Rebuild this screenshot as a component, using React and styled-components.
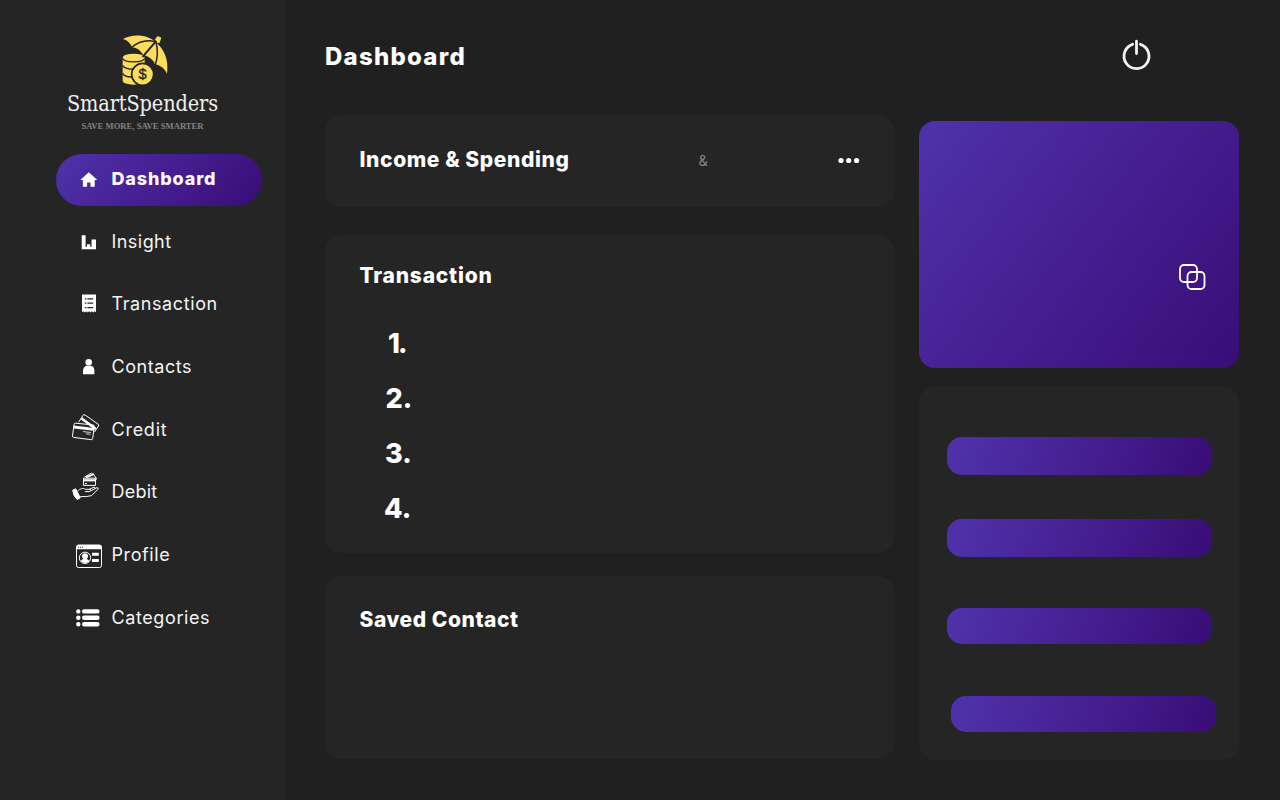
import React from "react";
import styled, { createGlobalStyle } from "styled-components";

const Global = createGlobalStyle`
  * { box-sizing: border-box; }
  body { margin: 0; background: #202020; color: #fff; font-family: Inter, "Liberation Sans", sans-serif; }
  h1, h2, p, ol, ul { margin: 0; padding: 0; list-style: none; }
  svg { display: block; flex: none; overflow: visible; }
`;

const purple = "linear-gradient(128deg, #4f32ab 0%, #441d8e 55%, #3a0e79 97%)";

const Page = styled.div`
  display: flex;
  width: 1280px;
  height: 800px;
  overflow: hidden;
  background: #202020;
`;

const Sidebar = styled.aside`
  width: 285px;
  flex: none;
  background: #252525;
`;

const Brand = styled.div`
  height: 154px;
  padding-top: 35px;
  display: flex;
  flex-direction: column;
  align-items: center;
`;

const LogoSvg = styled.svg`
  margin-left: 5px;
`;

const BrandName = styled.p`
  margin-top: 5px;
  font: 21.5px/26px "DejaVu Serif Condensed", "DejaVu Serif", serif;
  font-stretch: condensed;
  letter-spacing: -0.12px;
  white-space: nowrap;
  color: #f0f0f0;
`;

const Tagline = styled.p`
  margin-top: 4px;
  font: bold 8.6px/11px "Liberation Serif", serif;
  letter-spacing: 0.02px;
  white-space: nowrap;
  color: #878282;
`;

const Nav = styled.nav`
  display: flex;
  flex-direction: column;
  gap: 10.7px;
  margin-left: 56px;
  width: 206px;
`;

const NavItem = styled.div`
  display: flex;
  align-items: center;
  height: 52px;
  padding-left: 16px;
  border-radius: 26px;
  background: ${(p) => (p.$active ? purple : "none")};
`;

const NavLabel = styled.span`
  margin: 0 0 2px 7.5px;
  font-size: 18px;
  line-height: 24px;
  font-weight: ${(p) => (p.$active ? 800 : 400)};
  letter-spacing: ${(p) => p.$ls}px;
  color: ${(p) => (p.$active ? "#fbf6ff" : "#f4f4f4")};
`;

const Main = styled.main`
  flex: 1;
  padding: 0 41px 0 40px;
`;

const Header = styled.header`
  display: flex;
  justify-content: space-between;
  align-items: center;
  height: 114px;
  padding-right: 88px;
`;

const PowerSvg = styled.svg`
  margin-bottom: 3px;
`;

const Title = styled.h1`
  font-size: 24px;
  line-height: 30px;
  font-weight: 800;
  letter-spacing: ${(p) => p.$ls}px;
`;

const Columns = styled.div`
  display: flex;
  justify-content: space-between;
`;

const Left = styled.div`
  display: flex;
  flex-direction: column;
  width: 569px;
  padding-top: 1px;
`;

const Right = styled.div`
  display: flex;
  flex-direction: column;
  width: 320px;
  padding-top: 7px;
`;

const Card = styled.section`
  height: ${(p) => p.$h}px;
  margin-bottom: ${(p) => p.$gap || 0}px;
  padding: ${(p) => p.$pad || "0"};
  border-radius: 16px;
  background: #252525;
`;

const SummaryRow = styled.div`
  display: flex;
  align-items: center;
  height: 100%;
  padding-bottom: 2px;
`;

const CardTitle = styled.h2`
  font-size: 21px;
  line-height: 26px;
  font-weight: 800;
  white-space: nowrap;
  letter-spacing: ${(p) => p.$ls}px;
  width: ${(p) => (p.$w ? p.$w + "px" : "auto")};
`;

const Legend = styled.span`
  flex: 1;
  font-size: 14.5px;
  color: #858585;
`;

const Numbers = styled.ol`
  margin-top: 27px;
`;

const NumberRow = styled.li`
  height: 55px;
  line-height: 55px;
  padding-left: ${(p) => p.$indent}px;
  font-size: 27px;
  font-weight: 800;
  letter-spacing: ${(p) => p.$ls || 0}px;
`;

const BalanceCard = styled.section`
  display: flex;
  justify-content: flex-end;
  height: 247px;
  margin-bottom: 18px;
  padding: 142.5px 33.5px 0 0;
  border-radius: 16px;
  background: ${purple};
`;

const Pill = styled.div`
  width: 265px;
  height: ${(p) => p.$h}px;
  margin: ${(p) => p.$m};
  border-radius: 15px;
  background: linear-gradient(112deg, #4f32ab 2%, #441d8e 58%, #3a0e79 95%);
`;

function Logo() {
  return (
    <LogoSvg width="47" height="51" viewBox="215 30 141 153">
      <g fill="#fbdc5c">
        <path d="M217 98a33 12 0 0 1 66 0v70a33 11 0 0 1-66 0z" />
        <g fill="none" stroke="#252525" strokeWidth="4">
          <path d="M217 100c4 14 62 14 66 0M217 122c6 11 30 12 44 9M217 145c6 11 24 12 38 10" />
        </g>
        <circle cx="277" cy="148" r="33" stroke="#252525" strokeWidth="5" />
        <path d="M218 42c28-16 72-14 97 8 28 22 41 57 35 96-7-14-18-25-36-28-4-12-16-24-36-28-6-13-18-22-33-23-4-12-13-21-27-25z" />
        <path d="M314 43l8-10 11 5-5 15-8 1z" />
      </g>
      <g fill="none" stroke="#252525" strokeLinecap="round" strokeWidth="4.5">
        <path d="M315 50c-26-7-50 0-70 16M317 51c6 24 5 48-2 68" />
        <path d="M316 50l-38 44" strokeWidth="6" />
      </g>
      <text x="277" y="163" textAnchor="middle" fontFamily="Liberation Sans" fontSize="44" stroke="#252525" strokeWidth="1" fill="#252525">$</text>
    </LogoSvg>
  );
}

const icons = {
  home: <path transform="translate(6.6 5.75) scale(.85)" d="M10 20v-5h4v5h5v-8h3L12 3 2 12h3v8z" />,
  insight: <path d="M9.7 8.2h3.9v11.500h1.400v-2.500h3.200v2.500h1.300v-7.200H24v9.800H9.700z" />,
  receipt: (
    <>
      <path d="M10 5.6h14v17.6l-1.4-.9-1.4 1.3-1.4-1.3-1.4 1.3-1.4-1.3-1.4 1.3-1.4-1.3-1.4 1.3-1.4-1.3L10 23.2z" />
      <path d="M12.8 9.8h1.6m1 0h5.8M12.8 14.2h1.6m1 0h5.8M12.8 18.6h1.6m1 0h5.8" stroke="#252525" strokeWidth="1.2" />
    </>
  ),
  person: (
    <>
      <circle cx="16.7" cy="10.3" r="3.3" />
      <path d="M11 22.2v-3.4c0-3 2-4.8 3.4-5h4.8c1.5.2 3.2 2 3.2 5v3.4z" />
    </>
  ),
  cards: (
    <g fill="none" stroke="#fff" strokeWidth="1">
      <path d="M6.6 7.2 11 .4q.8-1.2 2-.4l13.2 9.2q1 .7.3 1.8l-4 6" />
      <path d="M9.3 3.3 23.8 14" strokeWidth="2.6" />
      <path d="m3.5 8.2 17.4 1.7q1.5.2 1.3 1.7L20.7 23.5q-.2 1.4-1.6 1.2L1.6 22.4Q.3 22.2.5 20.9L2 9.5Q2.2 8.1 3.5 8.2z" />
      <path d="m1.8 12 20 2.3" strokeWidth="2.8" />
      <path d="m11 16.6 8 .9m-5 1.3 4.500.5" strokeWidth=".8" />
    </g>
  ),
  hand: (
    <g fill="none" stroke="#fff" strokeWidth="1">
      <path d="M12.5 0l7-4 1.5 1.5M15 .5l6.500-3 3 4-1 2" />
      <path d="M14 .2l8-3.2" strokeWidth="1.6" />
      <path d="M11.5 1.200h12v7.200h-12z" />
      <path d="M11.5 3.300h12" strokeWidth="2.2" />
      <path d="M13 6.600h2" />
      <path d="M.7 13.200l3-1.400 4.600 9-3.200 1.700q-4-4-4.400-9.300z" fill="#fff" />
      <path d="M5.500 14.300c3-3 5.500-3.500 8-2h4.800q1.300 1.400-.4 2.300h-5M18.500 14l6.600-3.400q1.700.2 1 1.500l-6.500 6.500q-5 1.500-11.200.9M17.500 12.200l4.500-2q1.500 0 .8 1.300" />
    </g>
  ),
  profile: (
    <>
      <rect x="4.500" y="5" width="25" height="22.500" rx="2" fill="none" stroke="#fff" strokeWidth="1" />
      <path d="M4.500 9.300V7q0-2 2-2h21q2 0 2 2v2.300z" />
      <path d="M6 7.200h1m1 0h1m1 0h1" stroke="#252525" strokeWidth="1" />
      <circle cx="13" cy="17.800" r="5.700" fill="none" stroke="#fff" strokeWidth="1" />
      <circle cx="13" cy="16.200" r="3" />
      <path d="M8.700 21.300q.6-2 2.800-2.300h3q2.300.4 2.800 2.300-4 3.400-8.600 0z" />
      <path d="M20 14.200h6.800M20 20.400h6.800" stroke="#fff" strokeWidth="3" />
    </>
  ),
  list: (
    <g stroke="#fff" strokeWidth="4.400" strokeLinecap="round">
      <path d="M6.300 8.400h.01M12.200 8.400h13.200M6.300 14.800h.01M12.200 14.800h13.200M6.300 21.200h.01M12.200 21.200h13.200" />
    </g>
  ),
};

const items = [
  ["Dashboard", "home", 0.85],
  ["Insight", "insight", 0.45],
  ["Transaction", "receipt", 0.6],
  ["Contacts", "person", 0.55],
  ["Credit", "cards", 0.75],
  ["Debit", "hand", 0.25],
  ["Profile", "profile", 0.6],
  ["Categories", "list", 0.6],
];

export default function App() {
  return (
    <Page>
      <Global />
      <Sidebar>
        <Brand>
          <Logo />
          <BrandName>SmartSpenders</BrandName>
          <Tagline>SAVE MORE, SAVE SMARTER</Tagline>
        </Brand>
        <Nav>
          {items.map(([label, icon, ls], i) => (
            <NavItem key={label} $active={i === 0}>
              <svg width="32" height="32" viewBox="0 0 32 32" fill="#fff">{icons[icon]}</svg>
              <NavLabel $active={i === 0} $ls={ls}>{label}</NavLabel>
            </NavItem>
          ))}
        </Nav>
      </Sidebar>
      <Main>
        <Header>
          <Title $ls={1.25}>Dashboard</Title>
          <PowerSvg width="29" height="32" viewBox="0 0 29 32" fill="none" stroke="#f1f4f4" strokeWidth="2.8" strokeLinecap="round">
            <path d="M10.600 4.300a12.500 12.500 0 1 0 7.800 0M14.500 1.200v12.400" />
          </PowerSvg>
        </Header>
        <Columns>
          <Left>
            <Card $h={92} $gap={28} $pad="0 34.500px">
              <SummaryRow>
                <CardTitle $ls={0.6} $w={339}>Income &amp; Spending</CardTitle>
                <Legend>&amp;</Legend>
                <svg width="22" height="6" viewBox="0 0 22 6" fill="#fff">
                  <circle cx="3" cy="3.500" r="2.600" />
                  <circle cx="10.700" cy="3.500" r="2.600" />
                  <circle cx="18.600" cy="3.500" r="2.600" />
                </svg>
              </SummaryRow>
            </Card>
            <Card $h={318} $gap={23} $pad="28px 34.500px">
              <CardTitle $ls={0.8}>Transaction</CardTitle>
              <Numbers>
                <NumberRow $indent={28.5} $ls={-1.800}>1.</NumberRow>
                <NumberRow $indent={26}>2.</NumberRow>
                <NumberRow $indent={25.5}>3.</NumberRow>
                <NumberRow $indent={24.5}>4.</NumberRow>
              </Numbers>
            </Card>
            <Card $h={183} $pad="31px 34.500px">
              <CardTitle $ls={0.55}>Saved Contact</CardTitle>
            </Card>
          </Left>
          <Right>
            <BalanceCard>
              <svg width="27" height="26" viewBox="0 0 27 26" fill="none" stroke="#fff" strokeWidth="1.800">
                <rect x="1" y="1" width="17" height="17" rx="4" />
                <rect x="8.500" y="8" width="17" height="17" rx="4" />
              </svg>
            </BalanceCard>
            <Card $h={374} $pad="51px 0 0 28px">
              <Pill $h={38} $m="0 0 44px" />
              <Pill $h={38} $m="0 0 51px" />
              <Pill $h={36} $m="0 0 52px" />
              <Pill $h={36} $m="0 0 0 4px" />
            </Card>
          </Right>
        </Columns>
      </Main>
    </Page>
  );
}
